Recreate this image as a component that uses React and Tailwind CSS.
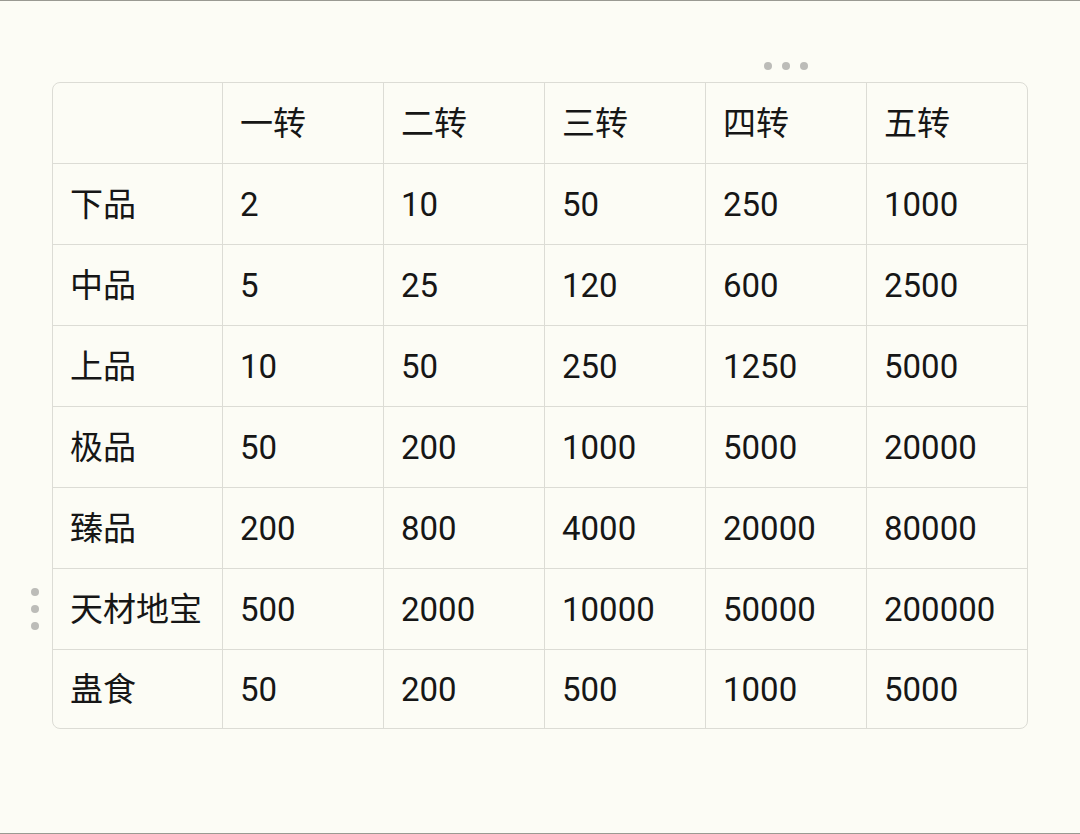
const header = ['', '一转', '二转', '三转', '四转', '五转'];

const rows = [
  ['下品', '2', '10', '50', '250', '1000'],
  ['中品', '5', '25', '120', '600', '2500'],
  ['上品', '10', '50', '250', '1250', '5000'],
  ['极品', '50', '200', '1000', '5000', '20000'],
  ['臻品', '200', '800', '4000', '20000', '80000'],
  ['天材地宝', '500', '2000', '10000', '50000', '200000'],
  ['蛊食', '50', '200', '500', '1000', '5000'],
];

function Cell({ text, lastCol, lastRow }) {
  return (
    <div
      className={`flex items-center pl-[17px] border-[#dcdcd5] ${lastRow ? 'h-[78px]' : 'h-[81px] border-b'} ${lastCol ? '' : 'border-r'}`}
    >
      <span className="text-[33px] leading-none text-[#161616] whitespace-nowrap">{text}</span>
    </div>
  );
}

export default function App() {
  const all = [header, ...rows];
  return (
    <div
      className="relative w-[1080px] h-[834px] bg-[#fcfcf5] border-t border-b border-[#9a9a92] overflow-hidden"
      style={{ fontFamily: 'Roboto, "Noto Sans CJK SC", sans-serif' }}
    >
      {/* drag handles */}
      <div className="absolute left-[764px] top-[61px] flex gap-[10px]">
        <span className="w-[8px] h-[8px] rounded-full bg-[#bcbcb8]" />
        <span className="w-[8px] h-[8px] rounded-full bg-[#bcbcb8]" />
        <span className="w-[8px] h-[8px] rounded-full bg-[#bcbcb8]" />
      </div>
      <div className="absolute left-[31px] top-[587px] flex flex-col gap-[9px]">
        <span className="w-[8px] h-[8px] rounded-full bg-[#bcbcb8]" />
        <span className="w-[8px] h-[8px] rounded-full bg-[#bcbcb8]" />
        <span className="w-[8px] h-[8px] rounded-full bg-[#bcbcb8]" />
      </div>

      <div className="pt-[81px] pl-[52px]">
        <div className="w-[976px] border border-[#dcdcd5] rounded-[8px] overflow-hidden">
          <div className="grid grid-cols-[170px_repeat(5,161px)]">
            {all.map((r, ri) =>
              r.map((c, ci) => (
                <Cell
                  key={`${ri}-${ci}`}
                  text={c}
                  lastCol={ci === r.length - 1}
                  lastRow={ri === all.length - 1}
                />
              ))
            )}
          </div>
        </div>
      </div>
    </div>
  );
}
